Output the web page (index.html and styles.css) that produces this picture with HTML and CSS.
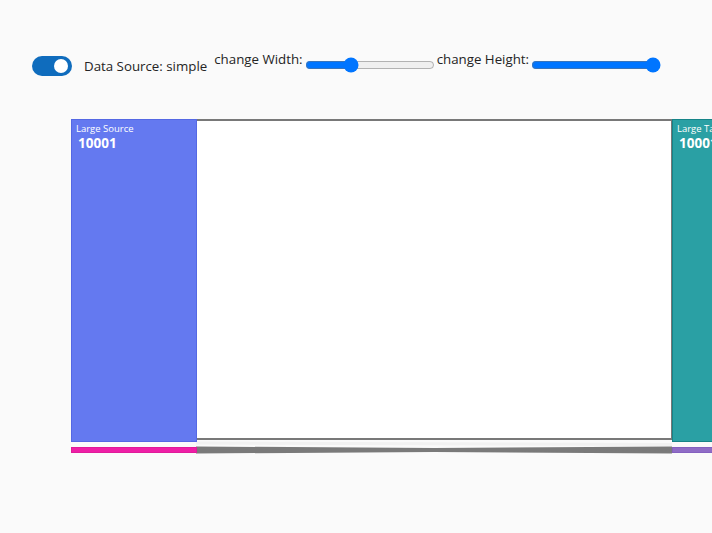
FILE: index.html
```html
<!DOCTYPE html>
<html>
<head>
<meta charset="utf-8">
<link rel="stylesheet" href="styles.css">
</head>
<body>
<div class="controls">
  <label class="switch">
    <span class="track"><span class="thumb"></span></span>
    <span class="switch-label">Data Source: simple</span>
  </label>
  <label class="slider">change Width:<input type="range" min="0" max="100" value="34"></label>
  <label class="slider">change Height:<input type="range" min="0" max="100" value="100"></label>
</div>
<div class="chart">
  <svg class="sankey" width="641" height="350" viewBox="0 0 641 350">
    <path class="link-main" d="M125,10 L601,10 L601,329 L125,329 Z"/>
    <path class="link-small" d="M125,338.5 C363,338.5 363,341.5 601,341.5"/>
    <path class="link-small" d="M125,341.5 C363,341.5 363,338.5 601,338.5"/>
    <path class="link-hl" d="M125,333 C363,333 363,334.5 601,334.5"/>
    <rect class="node-blue" x="0.5" y="9.5" width="125" height="322"/>
    <rect class="node-teal" x="601.5" y="9.5" width="125" height="322"/>
    <rect class="node-pink" x="0.5" y="337.5" width="125" height="5"/>
    <rect class="node-purple" x="601.5" y="337.5" width="125" height="5"/>
    <text class="node-name" x="5" y="22">Large Source</text>
    <text class="node-value" x="7" y="38">10001</text>
    <text class="node-name" x="606" y="22">Large Target</text>
    <text class="node-value" x="608" y="38">10001</text>
  </svg>
</div>
</body>
</html>
```
FILE: styles.css
```css
html, body {
  margin: 0;
  padding: 0;
  background: #fafafa;
  overflow: hidden;
  width: 712px;
  height: 533px;
  font-family: "Segoe UI", "Open Sans", "Noto Sans", sans-serif;
  color: #242424;
}

.controls {
  display: flex;
  align-items: flex-start;
  padding: 50px 0 0 32px;
  height: 110px;
  box-sizing: border-box;
}

.switch {
  display: flex;
  align-items: center;
  gap: 12px;
  margin-top: 6px;
}

.track {
  width: 40px;
  height: 20px;
  border-radius: 10px;
  background: #0f6cbd;
  position: relative;
  display: block;
}

.thumb {
  position: absolute;
  right: 4px;
  top: 3px;
  width: 14px;
  height: 14px;
  border-radius: 50%;
  background: #fff;
}

.switch-label {
  font-size: 13.3px;
}

.slider {
  display: flex;
  align-items: flex-start;
  font-size: 13.3px;
  line-height: 18px;
  margin-left: 7px;
}

.slider input {
  margin: 7px 1px 0 2px;
  width: 130px;
}

.slider + .slider {
  margin-left: 1px;
}

.chart {
  padding: 0 0 0 71px;
}

.sankey {
  display: block;
  overflow: hidden;
}

.link-main {
  fill: #ffffff;
  stroke: #787878;
  stroke-width: 2;
}

.link-small {
  fill: none;
  stroke: #7a7a7a;
  stroke-width: 4;
}

.link-hl {
  fill: none;
  stroke: #f2f2f2;
  stroke-width: 3;
}

.node-blue { fill: #6479f0; stroke: #5468e4; }
.node-teal { fill: #2aa0a4; stroke: #168488; }
.node-pink { fill: #ee1ea6; stroke: #e01a9a; }
.node-purple { fill: #8f6cc6; stroke: #8460bf; }

.node-name {
  fill: #ffffff;
  font-size: 9.5px;
}

.node-value {
  fill: #ffffff;
  font-size: 13.5px;
  font-weight: 700;
}
```
